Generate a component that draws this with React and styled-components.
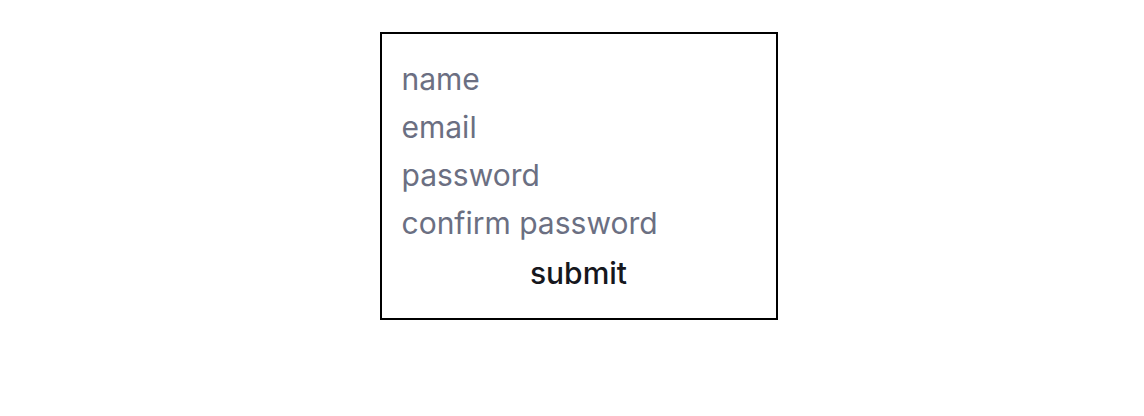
import React from 'react'
import styled, { createGlobalStyle } from 'styled-components'

const Global = createGlobalStyle`
  body {
    margin: 0;
    background: #ffffff;
    font-family: Inter, "Noto Sans", sans-serif;
  }
`

const Page = styled.div`
  display: flex;
  justify-content: center;
  padding: 32px 0 0 13px;
`

const Form = styled.form`
  width: 398px;
  box-sizing: border-box;
  border: 2px solid #000;
  padding: 21px 20px 21px;
  display: flex;
  flex-direction: column;
`

const Field = styled.input`
  height: 48px;
  border: none;
  outline: none;
  padding: 0;
  font-family: Inter, sans-serif;
  font-size: 30px;
  color: #111827;
  background: transparent;
  &::placeholder {
    color: #6b6f82;
  }
`

const Submit = styled.button`
  height: 50px;
  border: none;
  padding: 1px 0 0;
  background: transparent;
  font-family: Inter, sans-serif;
  font-size: 30px;
  font-weight: 500;
  color: #16171d;
  cursor: pointer;
`

const App = () => (
  <>
    <Global />
    <Page>
      <Form onSubmit={e => e.preventDefault()}>
        <Field placeholder="name" />
        <Field type="email" placeholder="email" />
        <Field type="password" placeholder="password" />
        <Field type="password" placeholder="confirm password" />
        <Submit type="submit">submit</Submit>
      </Form>
    </Page>
  </>
)

export default App
